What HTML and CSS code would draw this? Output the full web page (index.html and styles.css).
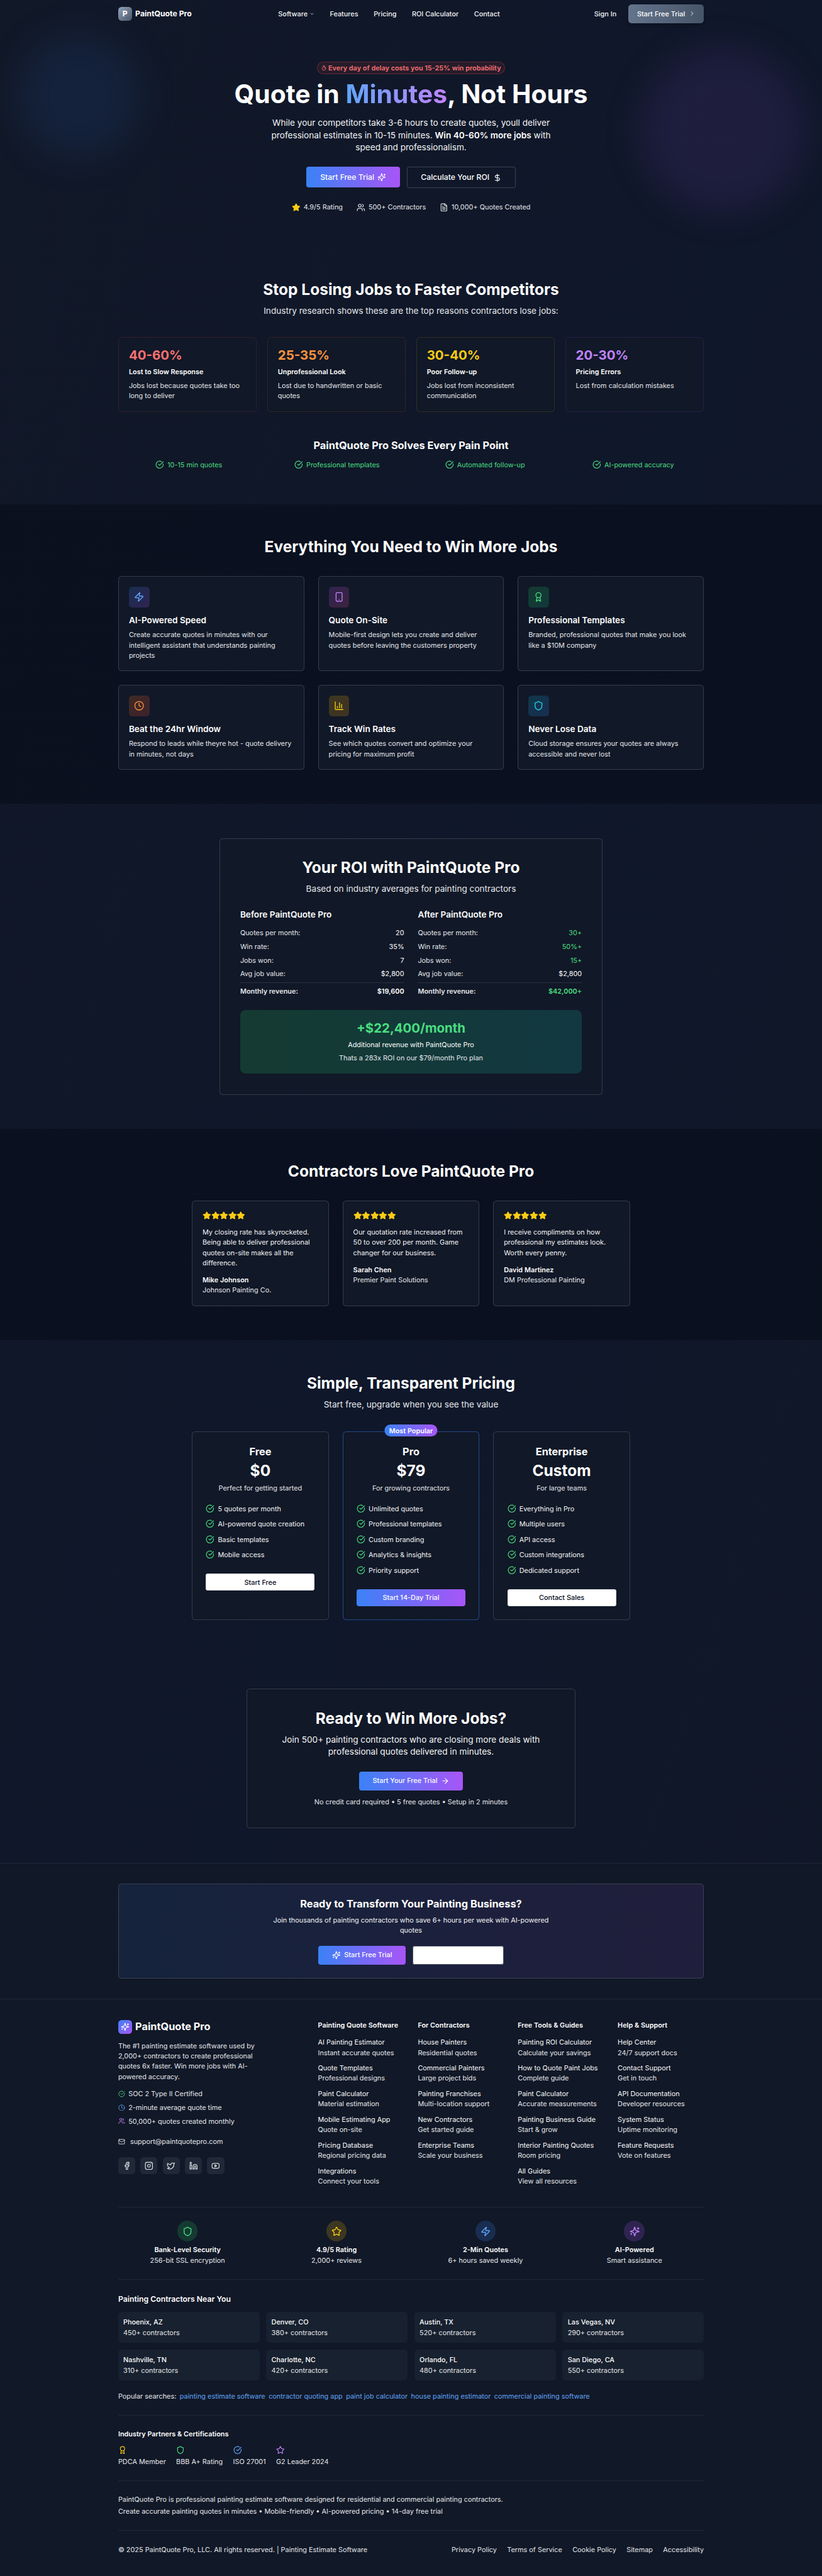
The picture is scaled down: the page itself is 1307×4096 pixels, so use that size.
FILE: index.html
```html
<!DOCTYPE html>
<html lang="en">
<head>
<meta charset="utf-8">
<title>PaintQuote Pro</title>
<link rel="stylesheet" href="styles.css">
</head>
<body>
<svg class="sprite" aria-hidden="true">
  <symbol id="check" viewBox="0 0 24 24"><path d="M21.801 10A10 10 0 1 1 17 3.335"/><path d="m9 11 3 3L22 4"/></symbol>
  <symbol id="users" viewBox="0 0 24 24"><path d="M16 21v-2a4 4 0 0 0-4-4H6a4 4 0 0 0-4 4v2"/><circle cx="9" cy="7" r="4"/><path d="M22 21v-2a4 4 0 0 0-3-3.87"/><path d="M16 3.13a4 4 0 0 1 0 7.75"/></symbol>
  <symbol id="file" viewBox="0 0 24 24"><path d="M15 2H6a2 2 0 0 0-2 2v16a2 2 0 0 0 2 2h12a2 2 0 0 0 2-2V7Z"/><path d="M14 2v4a2 2 0 0 0 2 2h4"/><path d="M10 9H8"/><path d="M16 13H8"/><path d="M16 17H8"/></symbol>
  <symbol id="zap" viewBox="0 0 24 24"><path d="M4 14a1 1 0 0 1-.78-1.63l9.9-10.2a.5.5 0 0 1 .86.46l-1.92 6.02A1 1 0 0 0 13 10h7a1 1 0 0 1 .78 1.63l-9.9 10.2a.5.5 0 0 1-.86-.46l1.92-6.02A1 1 0 0 0 11 14z"/></symbol>
  <symbol id="phone" viewBox="0 0 24 24"><rect width="14" height="20" x="5" y="2" rx="2"/><path d="M12 18h.01"/></symbol>
  <symbol id="award" viewBox="0 0 24 24"><path d="m15.477 12.89 1.515 8.526a.5.5 0 0 1-.81.47l-3.58-2.687a1 1 0 0 0-1.197 0l-3.586 2.686a.5.5 0 0 1-.81-.469l1.514-8.526"/><circle cx="12" cy="8" r="6"/></symbol>
  <symbol id="clock" viewBox="0 0 24 24"><circle cx="12" cy="12" r="10"/><path d="M12 6v6l4 2"/></symbol>
  <symbol id="chart" viewBox="0 0 24 24"><path d="M3 3v16a2 2 0 0 0 2 2h16"/><path d="M18 17V9"/><path d="M13 17V5"/><path d="M8 17v-3"/></symbol>
  <symbol id="shield" viewBox="0 0 24 24"><path d="M20 13c0 5-3.5 7.5-7.66 8.95a1 1 0 0 1-.67-.01C7.5 20.5 4 18 4 13V6a1 1 0 0 1 1-1c2 0 4.5-1.2 6.24-2.72a1.17 1.17 0 0 1 1.52 0C14.51 3.81 17 5 19 5a1 1 0 0 1 1 1z"/></symbol>
  <symbol id="star" viewBox="0 0 24 24"><path d="M11.525 2.295a.53.53 0 0 1 .95 0l2.31 4.679a2.123 2.123 0 0 0 1.595 1.16l5.166.756a.53.53 0 0 1 .294.904l-3.736 3.638a2.123 2.123 0 0 0-.611 1.878l.882 5.14a.53.53 0 0 1-.771.56l-4.618-2.428a2.122 2.122 0 0 0-1.973 0L6.396 21.01a.53.53 0 0 1-.77-.56l.881-5.139a2.122 2.122 0 0 0-.611-1.879L2.16 9.795a.53.53 0 0 1 .294-.906l5.165-.755a2.122 2.122 0 0 0 1.597-1.16z"/></symbol>
  <symbol id="sparkles" viewBox="0 0 24 24"><path d="M9.937 15.5A2 2 0 0 0 8.5 14.063l-6.135-1.582a.5.5 0 0 1 0-.962L8.5 9.936A2 2 0 0 0 9.937 8.5l1.582-6.135a.5.5 0 0 1 .963 0L14.063 8.5A2 2 0 0 0 15.5 9.937l6.135 1.581a.5.5 0 0 1 0 .964L15.5 14.063a2 2 0 0 0-1.437 1.437l-1.582 6.135a.5.5 0 0 1-.963 0z"/><path d="M20 3v4"/><path d="M22 5h-4"/><path d="M4 17v2"/><path d="M5 18H3"/></symbol>
  <symbol id="dollar" viewBox="0 0 24 24"><path d="M12 2v20"/><path d="M17 5H9.5a3.5 3.5 0 0 0 0 7h5a3.5 3.5 0 0 1 0 7H6"/></symbol>
  <symbol id="arrow" viewBox="0 0 24 24"><path d="M5 12h14"/><path d="m12 5 7 7-7 7"/></symbol>
  <symbol id="chev-right" viewBox="0 0 24 24"><path d="m9 18 6-6-6-6"/></symbol>
  <symbol id="chev-down" viewBox="0 0 24 24"><path d="m6 9 6 6 6-6"/></symbol>
  <symbol id="timer" viewBox="0 0 24 24"><path d="M9 1.5h6"/><path d="M12 2v4"/><circle cx="12" cy="14" r="8.5"/><path d="m12 14 4-4"/></symbol>
  <symbol id="mail" viewBox="0 0 24 24"><rect width="20" height="16" x="2" y="4" rx="2"/><path d="m22 7-8.97 5.7a1.94 1.94 0 0 1-2.06 0L2 7"/></symbol>
  <symbol id="facebook" viewBox="0 0 24 24"><path d="M18 2h-3a5 5 0 0 0-5 5v3H7v4h3v8h4v-8h3l1-4h-4V7a1 1 0 0 1 1-1h3z"/></symbol>
  <symbol id="instagram" viewBox="0 0 24 24"><rect width="20" height="20" x="2" y="2" rx="5"/><path d="M16 11.37A4 4 0 1 1 12.63 8 4 4 0 0 1 16 11.37z"/><path d="M17.5 6.5h.01"/></symbol>
  <symbol id="twitter" viewBox="0 0 24 24"><path d="M22 4s-.7 2.1-2 3.4c1.6 10-9.4 17.3-18 11.6 2.2.1 4.4-.6 6-2C3 15.5.5 9.6 3 5c2.2 2.6 5.6 4.1 9 4-.9-4.2 4-6.6 7-3.8 1.1 0 3-1.2 3-1.2z"/></symbol>
  <symbol id="linkedin" viewBox="0 0 24 24"><path d="M16 8a6 6 0 0 1 6 6v7h-4v-7a2 2 0 0 0-4 0v7h-4v-7a6 6 0 0 1 6-6z"/><rect width="4" height="12" x="2" y="9"/><circle cx="4" cy="4" r="2"/></symbol>
  <symbol id="youtube" viewBox="0 0 24 24"><path d="M2.5 17a24.12 24.12 0 0 1 0-10 2 2 0 0 1 1.4-1.4 49.56 49.56 0 0 1 16.2 0A2 2 0 0 1 21.5 7a24.12 24.12 0 0 1 0 10 2 2 0 0 1-1.4 1.4 49.55 49.55 0 0 1-16.2 0A2 2 0 0 1 2.5 17"/><path d="m10 15 5-3-5-3z"/></symbol>
</svg>

<header class="topbar wrap">
  <div class="brand"><span class="brand-mark">P</span><span>PaintQuote Pro</span></div>
  <nav class="nav">
    <a class="nav-drop">Software<svg class="i12"><use href="#chev-down"/></svg></a>
    <a>Features</a><a>Pricing</a><a>ROI Calculator</a><a>Contact</a>
  </nav>
  <div class="account"><a>Sign In</a><a class="btn-slate">Start Free Trial<svg class="i16"><use href="#chev-right"/></svg></a></div>
</header>

<div class="glow glow-blue"></div>
<div class="glow glow-purple"></div>

<main>
<section class="hero">
  <div class="alert"><svg class="timer"><use href="#timer"/></svg>Every day of delay costs you 15-25% win probability</div>
  <h1>Quote in <span class="grad-text">Minutes</span>, Not Hours</h1>
  <p class="lead">While your competitors take 3-6 hours to create quotes, youll deliver<br>professional estimates in 10-15 minutes. <strong>Win 40-60% more jobs</strong> with<br>speed and professionalism.</p>
  <div class="hero-actions">
    <a class="btn-hero grad">Start Free Trial<svg class="i20"><use href="#sparkles"/></svg></a>
    <a class="btn-hero outline">Calculate Your ROI<svg class="i20"><use href="#dollar"/></svg></a>
  </div>
  <div class="proof">
    <span><svg class="i20 filled"><use href="#star"/></svg>4.9/5 Rating</span>
    <span><svg class="i20"><use href="#users"/></svg>500+ Contractors</span>
    <span><svg class="i20"><use href="#file"/></svg>10,000+ Quotes Created</span>
  </div>
</section>

<section class="problems wrap">
  <h2>Stop Losing Jobs to Faster Competitors</h2>
  <p class="sub">Industry research shows these are the top reasons contractors lose jobs:</p>
  <div class="pain-grid">
    <article class="card pain red"><b>40-60%</b><h4>Lost to Slow Response</h4><p>Jobs lost because quotes take too<br>long to deliver</p></article>
    <article class="card pain orange"><b>25-35%</b><h4>Unprofessional Look</h4><p>Lost due to handwritten or basic<br>quotes</p></article>
    <article class="card pain yellow"><b>30-40%</b><h4>Poor Follow-up</h4><p>Jobs lost from inconsistent<br>communication</p></article>
    <article class="card pain purple"><b>20-30%</b><h4>Pricing Errors</h4><p>Lost from calculation mistakes</p></article>
  </div>
  <h3>PaintQuote Pro Solves Every Pain Point</h3>
  <div class="solves">
    <span><svg class="i20"><use href="#check"/></svg>10-15 min quotes</span>
    <span><svg class="i20"><use href="#check"/></svg>Professional templates</span>
    <span><svg class="i20"><use href="#check"/></svg>Automated follow-up</span>
    <span><svg class="i20"><use href="#check"/></svg>AI-powered accuracy</span>
  </div>
</section>

<section class="band">
  <div class="wrap">
    <h2>Everything You Need to Win More Jobs</h2>
    <div class="feature-grid">
      <article class="card feature"><span class="tile t-blue"><svg class="i24"><use href="#zap"/></svg></span><h4>AI-Powered Speed</h4><p>Create accurate quotes in minutes with our<br>intelligent assistant that understands painting<br>projects</p></article>
      <article class="card feature"><span class="tile t-purple"><svg class="i24"><use href="#phone"/></svg></span><h4>Quote On-Site</h4><p>Mobile-first design lets you create and deliver<br>quotes before leaving the customers property</p></article>
      <article class="card feature"><span class="tile t-green"><svg class="i24"><use href="#award"/></svg></span><h4>Professional Templates</h4><p>Branded, professional quotes that make you look<br>like a $10M company</p></article>
      <article class="card feature"><span class="tile t-orange"><svg class="i24"><use href="#clock"/></svg></span><h4>Beat the 24hr Window</h4><p>Respond to leads while theyre hot - quote delivery<br>in minutes, not days</p></article>
      <article class="card feature"><span class="tile t-yellow"><svg class="i24"><use href="#chart"/></svg></span><h4>Track Win Rates</h4><p>See which quotes convert and optimize your<br>pricing for maximum profit</p></article>
      <article class="card feature"><span class="tile t-cyan"><svg class="i24"><use href="#shield"/></svg></span><h4>Never Lose Data</h4><p>Cloud storage ensures your quotes are always<br>accessible and never lost</p></article>
    </div>
  </div>
</section>

<section class="plain">
  <div class="card roi">
    <h2>Your ROI with PaintQuote Pro</h2>
    <p class="sub">Based on industry averages for painting contractors</p>
    <div class="roi-cols">
      <div>
        <h4>Before PaintQuote Pro</h4>
        <dl>
          <div><dt>Quotes per month:</dt><dd>20</dd></div>
          <div><dt>Win rate:</dt><dd>35%</dd></div>
          <div><dt>Jobs won:</dt><dd>7</dd></div>
          <div><dt>Avg job value:</dt><dd>$2,800</dd></div>
          <div class="total"><dt>Monthly revenue:</dt><dd>$19,600</dd></div>
        </dl>
      </div>
      <div>
        <h4>After PaintQuote Pro</h4>
        <dl>
          <div><dt>Quotes per month:</dt><dd class="up">30+</dd></div>
          <div><dt>Win rate:</dt><dd class="up">50%+</dd></div>
          <div><dt>Jobs won:</dt><dd class="up">15+</dd></div>
          <div><dt>Avg job value:</dt><dd>$2,800</dd></div>
          <div class="total"><dt>Monthly revenue:</dt><dd class="up">$42,000+</dd></div>
        </dl>
      </div>
    </div>
    <div class="gain"><b>+$22,400/month</b><strong>Additional revenue with PaintQuote Pro</strong><span>Thats a 283x ROI on our $79/month Pro plan</span></div>
  </div>
</section>

<section class="band">
  <h2>Contractors Love PaintQuote Pro</h2>
  <div class="trio">
    <article class="card quote"><div class="stars"><svg class="i20 filled"><use href="#star"/></svg><svg class="i20 filled"><use href="#star"/></svg><svg class="i20 filled"><use href="#star"/></svg><svg class="i20 filled"><use href="#star"/></svg><svg class="i20 filled"><use href="#star"/></svg></div><p>My closing rate has skyrocketed.<br>Being able to deliver professional<br>quotes on-site makes all the<br>difference.</p><b>Mike Johnson</b><span>Johnson Painting Co.</span></article>
    <article class="card quote"><div class="stars"><svg class="i20 filled"><use href="#star"/></svg><svg class="i20 filled"><use href="#star"/></svg><svg class="i20 filled"><use href="#star"/></svg><svg class="i20 filled"><use href="#star"/></svg><svg class="i20 filled"><use href="#star"/></svg></div><p>Our quotation rate increased from<br>50 to over 200 per month. Game<br>changer for our business.</p><b>Sarah Chen</b><span>Premier Paint Solutions</span></article>
    <article class="card quote"><div class="stars"><svg class="i20 filled"><use href="#star"/></svg><svg class="i20 filled"><use href="#star"/></svg><svg class="i20 filled"><use href="#star"/></svg><svg class="i20 filled"><use href="#star"/></svg><svg class="i20 filled"><use href="#star"/></svg></div><p>I receive compliments on how<br>professional my estimates look.<br>Worth every penny.</p><b>David Martinez</b><span>DM Professional Painting</span></article>
  </div>
</section>

<section class="plain">
  <h2>Simple, Transparent Pricing</h2>
  <p class="sub">Start free, upgrade when you see the value</p>
  <div class="trio">
    <article class="card plan">
      <h3>Free</h3><b>$0</b><p>Perfect for getting started</p>
      <ul><li><svg class="i20"><use href="#check"/></svg>5 quotes per month</li><li><svg class="i20"><use href="#check"/></svg>AI-powered quote creation</li><li><svg class="i20"><use href="#check"/></svg>Basic templates</li><li><svg class="i20"><use href="#check"/></svg>Mobile access</li></ul>
      <a class="btn-plan white">Start Free</a>
    </article>
    <article class="card plan popular">
      <span class="ribbon grad">Most Popular</span>
      <h3>Pro</h3><b>$79</b><p>For growing contractors</p>
      <ul><li><svg class="i20"><use href="#check"/></svg>Unlimited quotes</li><li><svg class="i20"><use href="#check"/></svg>Professional templates</li><li><svg class="i20"><use href="#check"/></svg>Custom branding</li><li><svg class="i20"><use href="#check"/></svg>Analytics &amp; insights</li><li><svg class="i20"><use href="#check"/></svg>Priority support</li></ul>
      <a class="btn-plan grad">Start 14-Day Trial</a>
    </article>
    <article class="card plan">
      <h3>Enterprise</h3><b>Custom</b><p>For large teams</p>
      <ul><li><svg class="i20"><use href="#check"/></svg>Everything in Pro</li><li><svg class="i20"><use href="#check"/></svg>Multiple users</li><li><svg class="i20"><use href="#check"/></svg>API access</li><li><svg class="i20"><use href="#check"/></svg>Custom integrations</li><li><svg class="i20"><use href="#check"/></svg>Dedicated support</li></ul>
      <a class="btn-plan white">Contact Sales</a>
    </article>
  </div>
</section>

<section class="plain">
  <div class="card closer">
    <h2>Ready to Win More Jobs?</h2>
    <p class="closer-text">Join 500+ painting contractors who are closing more deals with<br>professional quotes delivered in minutes.</p>
    <a class="btn grad">Start Your Free Trial<svg class="i20"><use href="#arrow"/></svg></a>
    <p class="fine">No credit card required • 5 free quotes • Setup in 2 minutes</p>
  </div>
</section>
</main>

<footer>
  <div class="promo-row">
    <div class="wrap promo">
      <h3>Ready to Transform Your Painting Business?</h3>
      <p>Join thousands of painting contractors who save 6+ hours per week with AI-powered<br>quotes</p>
      <div class="promo-actions"><a class="btn grad"><svg class="i20"><use href="#sparkles"/></svg>Start Free Trial</a><a class="btn blank"></a></div>
    </div>
  </div>

  <div class="wrap">
    <div class="sitemap">
      <div class="about">
        <div class="foot-brand"><span class="foot-mark"><svg class="i20"><use href="#sparkles"/></svg></span>PaintQuote Pro</div>
        <p>The #1 painting estimate software used by<br>2,000+ contractors to create professional<br>quotes 6x faster. Win more jobs with AI-<br>powered accuracy.</p>
        <ul class="facts">
          <li><svg class="i16 green"><use href="#check"/></svg>SOC 2 Type II Certified</li>
          <li><svg class="i16 blue"><use href="#clock"/></svg>2-minute average quote time</li>
          <li><svg class="i16 violet"><use href="#users"/></svg>50,000+ quotes created monthly</li>
        </ul>
        <div class="mail"><svg class="i16"><use href="#mail"/></svg>support@paintquotepro.com</div>
        <div class="social">
          <a><svg class="i20"><use href="#facebook"/></svg></a><a><svg class="i20"><use href="#instagram"/></svg></a><a><svg class="i20"><use href="#twitter"/></svg></a><a><svg class="i20"><use href="#linkedin"/></svg></a><a><svg class="i20"><use href="#youtube"/></svg></a>
        </div>
      </div>
      <div class="links"><h4>Painting Quote Software</h4>
        <a><b>AI Painting Estimator</b><span>Instant accurate quotes</span></a>
        <a><b>Quote Templates</b><span>Professional designs</span></a>
        <a><b>Paint Calculator</b><span>Material estimation</span></a>
        <a><b>Mobile Estimating App</b><span>Quote on-site</span></a>
        <a><b>Pricing Database</b><span>Regional pricing data</span></a>
        <a><b>Integrations</b><span>Connect your tools</span></a>
      </div>
      <div class="links"><h4>For Contractors</h4>
        <a><b>House Painters</b><span>Residential quotes</span></a>
        <a><b>Commercial Painters</b><span>Large project bids</span></a>
        <a><b>Painting Franchises</b><span>Multi-location support</span></a>
        <a><b>New Contractors</b><span>Get started guide</span></a>
        <a><b>Enterprise Teams</b><span>Scale your business</span></a>
      </div>
      <div class="links"><h4>Free Tools &amp; Guides</h4>
        <a><b>Painting ROI Calculator</b><span>Calculate your savings</span></a>
        <a><b>How to Quote Paint Jobs</b><span>Complete guide</span></a>
        <a><b>Paint Calculator</b><span>Accurate measurements</span></a>
        <a><b>Painting Business Guide</b><span>Start &amp; grow</span></a>
        <a><b>Interior Painting Quotes</b><span>Room pricing</span></a>
        <a><b>All Guides</b><span>View all resources</span></a>
      </div>
      <div class="links"><h4>Help &amp; Support</h4>
        <a><b>Help Center</b><span>24/7 support docs</span></a>
        <a><b>Contact Support</b><span>Get in touch</span></a>
        <a><b>API Documentation</b><span>Developer resources</span></a>
        <a><b>System Status</b><span>Uptime monitoring</span></a>
        <a><b>Feature Requests</b><span>Vote on features</span></a>
      </div>
    </div>

    <div class="badges rule">
      <div><span class="disc d-green"><svg class="i24"><use href="#shield"/></svg></span><b>Bank-Level Security</b><span>256-bit SSL encryption</span></div>
      <div><span class="disc d-yellow"><svg class="i24"><use href="#star"/></svg></span><b>4.9/5 Rating</b><span>2,000+ reviews</span></div>
      <div><span class="disc d-blue"><svg class="i24"><use href="#zap"/></svg></span><b>2-Min Quotes</b><span>6+ hours saved weekly</span></div>
      <div><span class="disc d-purple"><svg class="i24"><use href="#sparkles"/></svg></span><b>AI-Powered</b><span>Smart assistance</span></div>
    </div>

    <div class="nearby rule">
      <h4>Painting Contractors Near You</h4>
      <div class="cities">
        <a><b>Phoenix, AZ</b><span>450+ contractors</span></a>
        <a><b>Denver, CO</b><span>380+ contractors</span></a>
        <a><b>Austin, TX</b><span>520+ contractors</span></a>
        <a><b>Las Vegas, NV</b><span>290+ contractors</span></a>
        <a><b>Nashville, TN</b><span>310+ contractors</span></a>
        <a><b>Charlotte, NC</b><span>420+ contractors</span></a>
        <a><b>Orlando, FL</b><span>480+ contractors</span></a>
        <a><b>San Diego, CA</b><span>550+ contractors</span></a>
      </div>
      <div class="searches"><span>Popular searches:</span><a>painting estimate software</a><a>contractor quoting app</a><a>paint job calculator</a><a>house painting estimator</a><a>commercial painting software</a></div>
    </div>

    <div class="partners rule">
      <h4>Industry Partners &amp; Certifications</h4>
      <div class="partner-row">
        <div><svg class="i20 gold"><use href="#award"/></svg><span>PDCA Member</span></div>
        <div><svg class="i20 green"><use href="#shield"/></svg><span>BBB A+ Rating</span></div>
        <div><svg class="i20 blue"><use href="#check"/></svg><span>ISO 27001</span></div>
        <div><svg class="i20 violet"><use href="#star"/></svg><span>G2 Leader 2024</span></div>
      </div>
    </div>

    <div class="summary rule">
      <p>PaintQuote Pro is professional painting estimate software designed for residential and commercial painting contractors.</p>
      <p>Create accurate painting quotes in minutes • Mobile-friendly • AI-powered pricing • 14-day free trial</p>
    </div>

    <div class="legal rule">
      <span>© 2025 PaintQuote Pro, LLC. All rights reserved. | Painting Estimate Software</span>
      <nav><a>Privacy Policy</a><a>Terms of Service</a><a>Cookie Policy</a><a>Sitemap</a><a>Accessibility</a></nav>
    </div>
  </div>
</footer>
</body>
</html>
```
FILE: styles.css
```css
/* 1rem is ten design pixels on a 1920px wide canvas */
html { font-size: 6.80729px; background: #111827; }
* { box-sizing: border-box; margin: 0; padding: 0; }
body {
  position: relative;
  font-family: Inter, "Liberation Sans", sans-serif;
  font-size: 1.6rem;
  line-height: 2.4rem;
  color: #e5e7eb;
  min-height: 4096px;
  overflow-x: hidden;
  background: linear-gradient(to bottom right, #111827, #0f172a 50%, #111827);
}
ul { list-style: none; }
.sprite { position: absolute; width: 0; height: 0; }
svg { fill: none; stroke: currentColor; stroke-width: 2; stroke-linecap: round; stroke-linejoin: round; flex: none; display: block; }
.i12 { width: 1.2rem; height: 1.2rem; }
.i16 { width: 1.6rem; height: 1.6rem; }
.i20 { width: 2rem; height: 2rem; }
.i24 { width: 2.4rem; height: 2.4rem; }
.filled { fill: #facc15; color: #facc15; }
.green { color: #4ade80; }
.blue { color: #60a5fa; }
.violet { color: #c084fc; }
.gold { color: #facc15; }
.wrap { width: 136.8rem; margin: 0 auto; }
.grad { background: linear-gradient(to right, #3b82f6, #a855f7); color: #fff; }
.card { background: #111827; border-radius: .8rem; box-shadow: inset 0 0 0 1px #353b49; }

h1, h2, h3, h4 { color: #fff; font-weight: 700; }
h2 { font-size: 3.6rem; line-height: 4rem; text-align: center; }
h3 { font-size: 2.4rem; line-height: 3.2rem; text-align: center; }
h4 { font-size: 2rem; line-height: 2.8rem; font-weight: 600; }
.sub { font-size: 2rem; line-height: 2.8rem; margin-top: 1.6rem; text-align: center; }

/* header */
.topbar { position: relative; z-index: 1; height: 6.4rem; display: flex; align-items: center; color: #f3f4f6; font-weight: 500; }
.brand { display: flex; align-items: center; gap: .8rem; font-size: 1.8rem; font-weight: 700; color: #fff; }
.brand-mark { width: 3.2rem; height: 3.2rem; border-radius: .8rem; background: linear-gradient(135deg, #94a3b8, #475569); display: grid; place-items: center; }
.nav { display: flex; gap: 3.6rem; margin-left: 20.2rem; }
.nav-drop { display: flex; align-items: center; gap: .4rem; }
.account { display: flex; align-items: center; gap: 2.8rem; margin-left: auto; }
.btn-slate { display: flex; align-items: center; gap: .8rem; height: 4.4rem; padding: 0 2rem; border-radius: .8rem; color: #fff; background: linear-gradient(to right, #64748b, #475569); box-shadow: 0 .4rem .8rem rgba(0, 0, 0, .2); }

/* soft colour behind the hero */
.glow { position: absolute; border-radius: 50%; filter: blur(4.4rem); }
.glow-blue { left: 4rem; top: 8rem; width: 28.8rem; height: 28.8rem; background: rgba(59, 130, 246, .1); }
.glow-purple { right: 4rem; top: 11.2rem; width: 38.4rem; height: 38.4rem; background: rgba(168, 85, 247, .1); }
main { position: relative; }

.hero { padding: 8rem 0; display: flex; flex-direction: column; align-items: center; text-align: center; }
.alert { display: flex; align-items: center; height: 3rem; padding: 0 1rem 0 1.1rem; border-radius: 1.5rem; font-weight: 600; color: #f87171; background: rgba(239, 68, 68, .1); box-shadow: inset 0 0 0 1px rgba(239, 68, 68, .3); }
.timer { width: 1.2rem; height: 1.2rem; margin-right: .4rem; stroke-width: 2.4; }
h1 { font-size: 6rem; line-height: 6rem; margin-top: 1.6rem; }
.grad-text { background: linear-gradient(to right, #60a5fa, #c084fc); -webkit-background-clip: text; background-clip: text; color: transparent; }
.lead { font-size: 2rem; line-height: 2.8rem; margin-top: 2.4rem; color: #f3f4f6; }
.lead strong { font-weight: 600; color: #fff; }
.hero-actions { display: flex; gap: 1.6rem; align-items: flex-start; margin-top: 3.2rem; }
.btn-hero { display: flex; align-items: center; gap: .8rem; height: 4.8rem; padding: 0 3.2rem; border-radius: .6rem; font-size: 1.8rem; font-weight: 500; color: #fff; }
.outline { height: 5rem; padding: 0 3.3rem; box-shadow: inset 0 0 0 1px #3b4252; }
.proof { display: flex; gap: 3.2rem; margin-top: 3.2rem; }
.proof span { display: flex; align-items: center; gap: .8rem; }

/* problems */
.problems { padding: 8rem 0; }
.pain-grid { display: grid; grid-template-columns: repeat(4, 1fr); gap: 2.4rem; margin: 4.8rem 0 6.4rem; }
.pain { padding: 2.5rem; }
.pain b { display: block; font-size: 3rem; line-height: 3.6rem; }
.pain h4 { font-size: 1.6rem; line-height: 2.4rem; margin: .8rem 0; }
.red { box-shadow: inset 0 0 0 1px rgba(239, 68, 68, .15); }
.red b { color: #f87171; }
.orange { box-shadow: inset 0 0 0 1px rgba(249, 115, 22, .15); }
.orange b { color: #fb923c; }
.yellow { box-shadow: inset 0 0 0 1px rgba(234, 179, 8, .15); }
.yellow b { color: #facc15; }
.purple { box-shadow: inset 0 0 0 1px rgba(168, 85, 247, .15); }
.purple b { color: #c084fc; }
.solves { display: grid; grid-template-columns: repeat(4, 1fr); gap: 1.6rem; margin-top: 1.6rem; color: #4ade80; }
.solves span { display: flex; align-items: center; justify-content: center; gap: .8rem; }

/* sections */
.band { padding: 8rem 0; background: rgba(3, 7, 18, .4); }
.plain { padding: 8rem 0; }
.feature-grid { display: grid; grid-template-columns: repeat(3, 1fr); gap: 3.2rem; margin-top: 4.8rem; }
.feature { padding: 2.5rem; }
.feature h4 { margin: 1.6rem 0 .8rem; }
.tile { width: 4.8rem; height: 4.8rem; border-radius: .8rem; display: grid; place-items: center; }
.t-blue { color: #60a5fa; background: linear-gradient(135deg, rgba(59, 130, 246, .2), rgba(168, 85, 247, .2)); }
.t-purple { color: #c084fc; background: linear-gradient(135deg, rgba(168, 85, 247, .2), rgba(236, 72, 153, .2)); }
.t-green { color: #4ade80; background: linear-gradient(135deg, rgba(34, 197, 94, .2), rgba(16, 185, 129, .2)); }
.t-orange { color: #fb923c; background: linear-gradient(135deg, rgba(249, 115, 22, .2), rgba(239, 68, 68, .2)); }
.t-yellow { color: #facc15; background: linear-gradient(135deg, rgba(234, 179, 8, .2), rgba(245, 158, 11, .2)); }
.t-cyan { color: #22d3ee; background: linear-gradient(135deg, rgba(6, 182, 212, .2), rgba(59, 130, 246, .2)); }

/* roi */
.roi { width: 89.6rem; margin: 0 auto; padding: 4.9rem; }
.roi-cols { display: grid; grid-template-columns: 1fr 1fr; gap: 3.2rem; margin: 3.2rem 0; }
.roi dl { display: grid; gap: .8rem; margin-top: 1.6rem; }
.roi dl div { display: flex; justify-content: space-between; }
.roi dd { color: #fff; }
.roi dd.up { color: #4ade80; }
.roi .total { padding-top: .9rem; box-shadow: inset 0 1px #2c333f; }
.roi .total dt, .roi .total dd { font-weight: 600; }
.gain { display: flex; flex-direction: column; gap: .8rem; padding: 2.4rem; text-align: center; border-radius: 1.2rem; background: linear-gradient(to right, rgba(34, 197, 94, .2), rgba(20, 184, 166, .2)); }
.gain b { font-size: 3rem; line-height: 3.6rem; color: #4ade80; }
.gain strong { font-weight: 400; color: #fff; }

/* three-up rows */
.trio { display: grid; grid-template-columns: repeat(3, 1fr); gap: 3.2rem; width: 102.4rem; margin: 4.8rem auto 0; }
.quote { padding: 2.5rem; }
.stars { display: flex; }
.quote p { margin: 1.6rem 0; color: #f3f4f6; }
.quote b, .quote span { display: block; }
.quote b { font-weight: 600; color: #fff; }
.plan { position: relative; padding: 3.3rem; text-align: center; }
.plan b { display: block; font-size: 3.6rem; line-height: 4rem; margin: .8rem 0; color: #fff; }
.plan ul { display: grid; gap: 1.2rem; margin: 2.4rem 0 3.2rem; color: #f3f4f6; }
.plan li { display: flex; align-items: center; gap: .8rem; }
.plan li svg { color: #4ade80; }
.popular { box-shadow: inset 0 0 0 1px #23498a; }
.ribbon { position: absolute; top: -1.5rem; left: 50%; transform: translateX(-50%); padding: .2rem 1rem; border-radius: 1.4rem; font-weight: 600; white-space: nowrap; }
.btn-plan { display: grid; place-items: center; height: 4rem; border-radius: .6rem; font-weight: 500; }
.white { background: #fff; color: #020817; box-shadow: inset 0 0 0 1px #e2e8f0; }

.closer { width: 76.8rem; margin: 0 auto; padding: 4.9rem; display: flex; flex-direction: column; align-items: center; text-align: center; }
.closer-text { font-size: 2rem; line-height: 2.8rem; margin: 1.6rem 0 3.2rem; color: #f3f4f6; }
.btn { display: flex; align-items: center; gap: .8rem; height: 4.4rem; padding: 0 3.2rem; border-radius: .6rem; font-weight: 500; }
.fine { margin-top: 1.6rem; }

/* footer */
footer { position: relative; background: #111827; box-shadow: inset 0 1px #1f2937; }
.promo-row { padding: 4.9rem 0; box-shadow: inset 0 -1px #1f2937; }
.promo { padding: 3.3rem; text-align: center; border-radius: .8rem; background: linear-gradient(to right, rgba(59, 130, 246, .1), rgba(168, 85, 247, .1)); box-shadow: inset 0 0 0 1px #3a4053; }
.promo p { margin: .8rem 0 2.4rem; color: #f3f4f6; }
.promo-actions { display: flex; justify-content: center; gap: 1.6rem; }
.blank { width: 21.2rem; background: #fff; box-shadow: inset 0 0 0 1px #4b5563; }
.rule { box-shadow: inset 0 1px #1f2937; }
.sitemap { display: grid; grid-template-columns: 43.467rem repeat(4, 1fr); column-gap: 3.2rem; padding: 4.8rem 0; white-space: nowrap; }
.foot-brand { display: flex; align-items: center; gap: .8rem; font-size: 2.4rem; line-height: 3.2rem; font-weight: 700; color: #fff; }
.foot-mark { width: 3.2rem; height: 3.2rem; border-radius: .8rem; background: linear-gradient(135deg, #3b82f6, #a855f7); display: grid; place-items: center; }
.about p { margin: 1.6rem 0; }
.facts { display: grid; gap: .8rem; }
.facts li { display: flex; align-items: center; gap: .8rem; }
.mail { display: flex; align-items: center; gap: 1.2rem; margin: 2.4rem 0; }
.social { display: flex; gap: 1.2rem; }
.social a { width: 4rem; height: 4rem; border-radius: .8rem; background: #1f2937; display: grid; place-items: center; }
.links h4 { font-size: 1.6rem; line-height: 2.4rem; margin-bottom: 1.6rem; }
.links a { display: block; margin-bottom: 1.2rem; }
.links a:last-child { margin-bottom: 0; }
.links b, .links span, .cities b, .cities span { display: block; }
.links b { font-weight: 400; color: #f9fafb; }
.badges { display: grid; grid-template-columns: repeat(4, 1fr); gap: 2.4rem; padding: 3.3rem 0 3.2rem; text-align: center; }
.badges div { display: flex; flex-direction: column; align-items: center; }
.badges b { font-weight: 600; color: #fff; margin-top: .8rem; }
.disc { width: 4.8rem; height: 4.8rem; border-radius: 50%; display: grid; place-items: center; }
.d-green { color: #4ade80; background: rgba(34, 197, 94, .2); }
.d-yellow { color: #facc15; background: rgba(234, 179, 8, .2); }
.d-blue { color: #60a5fa; background: rgba(59, 130, 246, .2); }
.d-purple { color: #c084fc; background: rgba(168, 85, 247, .2); }
.nearby { padding: 3.3rem 0 3.2rem; }
.nearby h4 { font-size: 1.8rem; }
.cities { display: grid; grid-template-columns: repeat(4, 1fr); gap: 1.6rem; margin: 1.6rem 0 2.4rem; }
.cities a { padding: 1.2rem; border-radius: .8rem; background: rgba(31, 41, 55, .5); }
.cities b { font-weight: 500; color: #fff; }
.searches { display: flex; gap: .8rem; }
.searches a { color: #60a5fa; }
.partners { padding: 3.3rem 0 3.2rem; }
.partners h4 { font-size: 1.6rem; line-height: 2.4rem; }
.partner-row { display: flex; gap: 2.4rem; margin-top: 1.6rem; }
.partner-row span { display: block; margin-top: .4rem; }
.summary { display: grid; gap: .4rem; padding: 3.3rem 0 3.2rem; }
.legal { display: flex; justify-content: space-between; padding: 3.3rem 0 4.8rem; }
.legal nav { display: flex; gap: 2.4rem; }
```
